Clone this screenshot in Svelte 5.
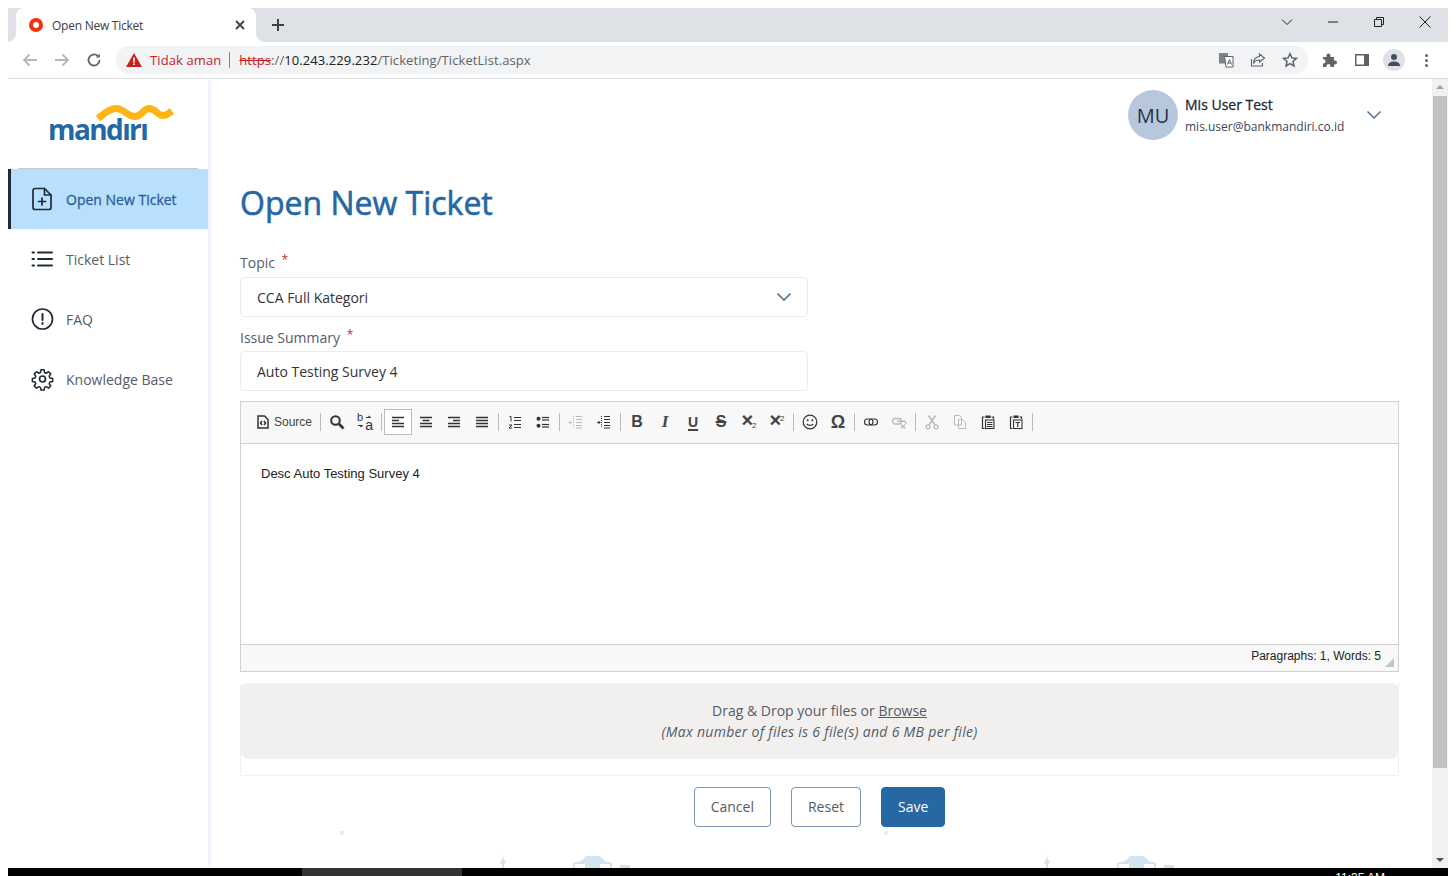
<script>
	const nav = [
		{ label: 'Open New Ticket', active: true, icon: '<path d="M4 1.500h9.500L20 8v12.500a2 2 0 0 1-2 2H4a2 2 0 0 1-2-2v-17a2 2 0 0 1 2-2z"/><path d="M13.500 1.500V8H20M11 11v7M7.500 14.500h7"/>' },
		{ label: 'Ticket List', icon: '<path d="M7 5.500h14M7 12h14M7 18.500h14" stroke-width="2"/><path d="M1.500 5.500h1.500M1.500 12h1.500M1.500 18.500h1.500" stroke-width="2"/>' },
		{ label: 'FAQ', icon: '<circle cx="11.500" cy="12" r="10"/><path d="M11.500 7v6M11.500 16v1" stroke-width="2"/>' },
		{ label: 'Knowledge Base', icon: '<circle cx="11.500" cy="12" r="3"/><path d="M9.800 1.800h3.400l.6 3 1.800.8 2.600-1.700 2.400 2.400-1.700 2.600.8 1.800 3 .6v3.400l-3 .6-.8 1.800 1.700 2.600-2.400 2.400-2.600-1.700-1.800.8-.6 3H9.800l-.6-3-1.800-.8-2.600 1.700-2.400-2.400 1.700-2.600-.8-1.800-3-.6v-3.400l3-.6.800-1.800-1.700-2.600 2.400-2.400 2.600 1.700 1.800-.8z" transform="translate(1.100 1.200) scale(.905)"/>' }
	];

	const lines = (rows) => rows.map(([a, b, y]) => `<path d="M${a} ${y}H${b}"/>`).join('');

	// ckeditor toolbar, one entry per button, 'sep' for a divider
	const tools = [
		{ cls: 'source' },
		'sep',
		{ svg: '<circle cx="6.500" cy="6.500" r="4.300" stroke-width="2"/><path d="M10 10l4.500 4.500" stroke-width="2.600"/>' },
		{ text: 'b', sub: 'a', svg: '<path d="M9 3.500h4l-1.500-1.500M1 11.500h4l-1.500 1.500" stroke-width="1.100"/>', cls: 'replace' },
		'sep',
		{ svg: lines([[2, 14, 3.5], [2, 9, 6.5], [2, 14, 9.5], [2, 14, 12.5]]), cls: 'on' },
		{ svg: lines([[2, 14, 3.5], [4.5, 11.5, 6.5], [2, 14, 9.5], [2, 14, 12.5]]) },
		{ svg: lines([[2, 14, 3.5], [7, 14, 6.5], [2, 14, 9.5], [2, 14, 12.5]]) },
		{ svg: lines([[2, 14, 3.5], [2, 14, 6.500], [2, 14, 9.5], [2, 14, 12.5]]) },
		'sep',
		{ svg: '<g stroke-width="1">' + lines([[7, 14, 3.5], [7, 14, 6.500], [7, 14, 10.500], [7, 14, 13.500]]) + '</g><path d="M2.500 2.500h1.500v5M2 11h3l-3 3h3" stroke-width="1"/>' },
		{ svg: '<g stroke-width="1.200">' + lines([[7, 14, 3.5], [7, 14, 6], [7, 14, 10.500], [7, 14, 13]]) + '</g><circle cx="3.500" cy="4.800" r="2" fill="#333" stroke="none"/><circle cx="3.500" cy="11.800" r="2" fill="#333" stroke="none"/>' },
		'sep',
		{ off: true, svg: '<g stroke-width="1">' + lines([[8, 14, 2.500], [8, 14, 5.500], [8, 14, 8.500], [8, 14, 11.500], [8, 14, 14]]) + '</g><path d="M5.500 2v12" stroke-width="1" stroke-dasharray="1 1"/><path d="M1 8.500h3M2.500 7l-1.500 1.500 1.500 1.500" stroke-width="1"/>' },
		{ svg: '<g stroke-width="1">' + lines([[8, 14, 2.500], [8, 14, 5.500], [8, 14, 8.500], [8, 14, 11.500], [8, 14, 14]]) + '</g><path d="M5.500 2v12" stroke-width="1" stroke-dasharray="1 1"/><path d="M1 8.500h3M2.500 7l1.500 1.500-1.500 1.500" stroke-width="1"/>' },
		'sep',
		{ glyph: 'B', cls: 'g-b' },
		{ glyph: 'I', cls: 'g-i' },
		{ glyph: 'U', cls: 'g-u' },
		{ glyph: 'S', cls: 'g-s' },
		{ glyph: '×', tiny: '2', cls: 'g-x down' },
		{ glyph: '×', tiny: '2', cls: 'g-x up' },
		'sep',
		{ svg: '<circle cx="8" cy="8" r="6.800" stroke-width="1.200"/><circle cx="5.700" cy="6.200" r="1" fill="#333" stroke="none"/><circle cx="10.300" cy="6.200" r="1" fill="#333" stroke="none"/><path d="M4.800 9.800c1.500 2 4.900 2 6.400 0" stroke-width="1.200"/>' },
		{ glyph: 'Ω', cls: 'g-o' },
		'sep',
		{ svg: '<rect x="1.500" y="5" width="8.500" height="6" rx="3" stroke-width="1.100"/><rect x="6" y="5" width="8.500" height="6" rx="3" stroke-width="1.100"/>' },
		{ off: true, svg: '<rect x="1.500" y="4.500" width="9" height="5.500" rx="2.700" stroke-width="1.400"/><path d="M6 7.200h7.500c1.200 0 1.500 2 1 2.800" stroke-width="1.400"/><path d="M10 10.500l4 4M14 10.500l-4 4" stroke-width="1.400"/>' },
		'sep',
		{ off: true, svg: '<path d="M4.500 1.500l6.500 9.500M11.500 1.500L5 11" stroke-width="1.700"/><circle cx="4" cy="12.800" r="2" stroke-width="1.300"/><circle cx="12" cy="12.800" r="2" stroke-width="1.300"/>' },
		{ off: true, svg: '<path d="M2.500 1.500h5l2 2v7.500h-7zM6.500 5.500h4l3 3v6h-7z" stroke-width="1"/>' },
		{ svg: '<path d="M4.500 3H2.500v11.500h2M5.500 3h5M11.500 3h2v2" stroke-width="1.200"/><rect x="5.500" y="1.500" width="5" height="2.500" fill="#333" stroke="none"/><rect x="5.500" y="6" width="8.500" height="8.500" stroke-width="1.100"/><path d="M7 8.500h5.500M7 10.500h5.500M7 12.500h5.500" stroke-width="1"/>' },
		{ svg: '<path d="M4.500 3H2.500v11.500h2M11.500 3h2v2" stroke-width="1.200"/><rect x="5.500" y="1.500" width="5" height="2.500" fill="#333" stroke="none"/><rect x="5.500" y="6" width="8.500" height="8.500" stroke-width="1.100"/><path d="M7.500 8.500h4.500M9.750 8.500v4.500" stroke-width="1.200"/>' },
		'sep'
	];
</script>

<div class="window">
	<div class="tabstrip">
		<div class="tab">
			<span class="favicon"></span>
			<span class="tab-title">Open New Ticket</span>
			<svg class="tab-x" width="10" height="10" viewBox="0 0 10 10"><path d="M1 1l8 8M9 1L1 9" /></svg>
		</div>
		<svg class="newtab" width="12" height="12" viewBox="0 0 12 12"><path d="M6 0v12M0 6h12" /></svg>
		<div class="caption">
			<svg width="12" height="12" viewBox="0 0 12 12" class="cap-chev"><path d="M1 3.500l5 5 5-5" /></svg>
			<svg width="12" height="12" viewBox="0 0 12 12" class="cap-min"><path d="M1 6h10" /></svg>
			<svg width="12" height="12" viewBox="0 0 12 12" class="cap-max"><path d="M1.500 3.500h7v7h-7zM3.500 3.500v-2h7v7h-2" /></svg>
			<svg width="12" height="12" viewBox="0 0 12 12" class="cap-close"><path d="M.5.500l11 11M11.500.500l-11 11" /></svg>
		</div>
	</div>

	<div class="toolbar">
		<div class="nav-btns">
			<svg width="16" height="16" viewBox="0 0 16 16" class="ico-off"><path d="M15 8H2M7.500 2.500L2 8l5.500 5.500" /></svg>
			<svg width="16" height="16" viewBox="0 0 16 16" class="ico-off"><path d="M1 8h13M8.500 2.500L14 8l-5.500 5.500" /></svg>
			<svg width="16" height="16" viewBox="0 0 16 16" class="ico-dark"><path d="M13.500 8a5.500 5.500 0 1 1-1.600-3.900" /><path d="M13.800 1.500v4h-4z" fill="#5f6368" stroke="none" /></svg>
		</div>
		<div class="omnibox">
			<svg class="warn" width="16" height="14" viewBox="0 0 16 14"><path d="M8 0l8 14H0z" fill="#c5221f" /><path d="M7.200 4.500h1.600v5H7.200zM7.200 10.500h1.600v1.600H7.200z" fill="#fff" /></svg>
			<span class="insecure">Tidak aman</span>
			<span class="omni-div"></span>
			<span class="url"><span class="scheme">https</span>://<span class="host">10.243.229.232</span>/Ticketing/TicketList.aspx</span>
			<div class="omni-right">
				<svg width="16" height="16" viewBox="0 0 16 16"><rect x="1" y="1" width="9" height="10.500" fill="#7f8387" /><path d="M6.500 4.500h8.500v10.500H8z" fill="#fff" stroke="#5f6368" stroke-width="1" /><path d="M9.500 12.500l2-5 2 5M10 11h3" stroke="#5f6368" stroke-width="1" fill="none" /></svg>
				<svg width="16" height="16" viewBox="0 0 16 16" class="line"><path d="M1.500 7v7h11v-3" /><path d="M9.500 2l5 4-5 4V8C7 8 4.500 9 3.500 11.500 3.500 7.500 6 5 9.500 4.500z" /></svg>
				<svg width="16" height="16" viewBox="0 0 16 16" class="line strong"><path d="M8 1.700l1.900 4.200 4.500.5-3.400 3 1 4.500L8 11.600l-4 2.300 1-4.500-3.400-3 4.500-.5z" /></svg>
			</div>
		</div>
		<div class="tool-right">
			<svg width="16" height="16" viewBox="0 0 16 16"><path d="M1 5h3.500V3.500a2 2 0 0 1 4 0V5H12v3.500h1a2 2 0 0 1 0 4h-1V15H8.500v-1a2 2 0 0 0-4 0v1H1v-3.500h1a2.200 2.200 0 0 0 0-4.200H1z" fill="#5f6368" /></svg>
			<svg width="16" height="16" viewBox="0 0 16 16"><rect x="1" y="2" width="14" height="12" fill="#5f6368" /><rect x="2.500" y="3.500" width="7.500" height="9" fill="#fff" /></svg>
			<span class="profile"><svg width="14" height="14" viewBox="0 0 14 14"><circle cx="7" cy="4" r="3" fill="#444d5e" /><path d="M1 13c0-3 2.500-4.500 6-4.500s6 1.500 6 4.500z" fill="#444d5e" /></svg></span>
			<span class="kebab"><i></i><i></i><i></i></span>
		</div>
	</div>

	<div class="viewport">
		<aside class="sidebar">
			<div class="brand">
				<span class="wordmark">mandırı</span>
				<svg class="wave" width="78" height="20" viewBox="0 0 78 20"><path d="M2 13.500C8 9 13 3.500 20 3.500c8 0 11 8 19 8 7 0 8-8 14-8 7 0 8 7 14 7 3 0 6-2 9-4.500" fill="none" stroke="#fdb515" stroke-width="7" /></svg>
			</div>
			<nav>
				{#each nav as item}
					<a class="nav-item" class:active={item.active} href="#top">
						<svg width="23" height="24" viewBox="0 0 23 24">{@html item.icon}</svg>
						<span>{item.label}</span>
					</a>
				{/each}
			</nav>
		</aside>

		<main class="content">
			<div class="skyline" aria-hidden="true">
				{#each [0, 544] as shift}
					<svg width="460" height="44" viewBox="0 0 460 44" style="left: {shift}px">
						<rect x="132" y="7" width="4" height="4" fill="#e6eef8" />
						<path d="M295 31l1 5 2 2-2 3v3h-2v-3l-2-3 2-2z" fill="#d3e4f1" />
						<path d="M365 39l8-2 5-5h14l5 5 7 2v5h-39z" fill="#d3e4f1" />
						<path d="M367 40h10v4h-10zM392 40h10v4h-10z" fill="#fff" />
						<rect x="412" y="41" width="10" height="3" fill="#d3e4f1" />
					</svg>
				{/each}
			</div>

			<header class="userbar">
				<span class="avatar">MU</span>
				<div class="who">
					<div class="who-name">Mis User Test</div>
					<div class="who-mail">mis.user@bankmandiri.co.id</div>
				</div>
				<svg class="user-chev" width="16" height="10" viewBox="0 0 16 10"><path d="M1.500 1.500L8 8l6.500-6.500" /></svg>
			</header>

			<h1>Open New Ticket</h1>

			<label class="field-label" for="topic">Topic <em>*</em></label>
			<div class="field select" id="topic">
				<span>CCA Full Kategori</span>
				<svg width="16" height="10" viewBox="0 0 16 10"><path d="M1.500 1.500L8 8l6.500-6.500" /></svg>
			</div>

			<label class="field-label second" for="summary">Issue Summary <em>*</em></label>
			<div class="field" id="summary"><span>Auto Testing Survey 4</span></div>

			<section class="editor">
				<div class="ed-toolbar">
					{#each tools as t}
						{#if t === 'sep'}
							<span class="sep"></span>
						{:else if t.cls === 'source'}
							<span class="ed-btn source">
								<svg width="12" height="14" viewBox="0 0 12 14"><path d="M1 1h6.500L11 4.500V13H1z" fill="none" stroke="#333" /><path d="M5 6L3.500 8 5 10M7 6l1.500 2L7 10" fill="none" stroke="#333" /></svg>
								<span>Source</span>
							</span>
						{:else}
							<span class="ed-btn {t.cls ?? ''}" class:off={t.off}>
								{#if t.glyph}
									<span class="glyph">{t.glyph}{#if t.tiny}<small>{t.tiny}</small>{/if}</span>
								{:else}
									{#if t.text}
										<span class="rep-b">{t.text}</span><span class="rep-a">{t.sub}</span>
									{/if}
									<svg width="16" height="16" viewBox="0 0 16 16">{@html t.svg}</svg>
								{/if}
							</span>
						{/if}
					{/each}
				</div>
				<div class="ed-body">Desc Auto Testing Survey 4</div>
				<div class="ed-status">
					<span>Paragraphs: 1, Words: 5</span>
					<span class="grip"></span>
				</div>
			</section>

			<div class="upload">
				<div class="drop">
					<div>Drag &amp; Drop your files or <u>Browse</u></div>
					<div class="hint">(Max number of files is 6 file(s) and 6 MB per file)</div>
				</div>
			</div>

			<div class="actions">
				<button type="button" class="btn">Cancel</button>
				<button type="button" class="btn">Reset</button>
				<button type="button" class="btn primary">Save</button>
			</div>
		</main>

		<div class="scrollbar">
			<span class="arrow up"></span>
			<span class="thumb"></span>
			<span class="arrow down"></span>
		</div>
	</div>

	<div class="taskbar">
		<span class="task-active"></span>
		<span class="clock">11:35 AM</span>
	</div>
</div>

<style>
	:global(body) {
		margin: 0;
		background: #fff;
		overflow: hidden;
	}
	.window {
		height: 868px;
		padding: 8px 8px 0;
		display: flex;
		flex-direction: column;
		font-family: 'Open Sans', 'Noto Sans', sans-serif;
		color: #333;
	}
	svg {
		display: block;
		flex: none;
	}

	.tabstrip {
		height: 34px;
		background: #dee1e6;
		display: flex;
		align-items: flex-end;
		flex: none;
		position: relative;
	}
	.tab {
		margin-left: 8px;
		width: 240px;
		height: 34px;
		background: #fff;
		border-radius: 8px 8px 0 0;
		display: flex;
		align-items: center;
		box-sizing: border-box;
		padding-left: 13px;
		position: relative;
	}
	.tab::before,
	.tab::after {
		content: '';
		position: absolute;
		bottom: 0;
		width: 8px;
		height: 8px;
	}
	.tab::before {
		left: -8px;
		background: radial-gradient(circle at 0 0, #dee1e6 7.500px, #fff 8px);
	}
	.tab::after {
		right: -8px;
		background: radial-gradient(circle at 100% 0, #dee1e6 7.500px, #fff 8px);
	}
	.favicon {
		width: 14px;
		height: 14px;
		border-radius: 50%;
		background: #f4300e;
		position: relative;
	}
	.favicon::after {
		content: '';
		position: absolute;
		inset: 4px;
		background: #fff;
		border-radius: 50%;
	}
	.tab-title {
		margin-left: 9px;
		font-size: 12px;
		letter-spacing: -0.25px;
		color: #3c4043;
		flex: 1;
	}
	.tab-x {
		margin-right: 11px;
		stroke: #3c4043;
		stroke-width: 1.800;
		fill: none;
	}
	.newtab {
		align-self: center;
		margin-left: 16px;
		stroke: #3c4043;
		stroke-width: 2;
		fill: none;
	}
	.caption {
		margin-left: auto;
		align-self: flex-start;
		margin-top: 8px;
		display: flex;
		gap: 34px;
		margin-right: 17px;
	}
	.caption svg {
		stroke: #202124;
		fill: none;
		stroke-width: 1;
	}

	.toolbar {
		height: 36px;
		border-bottom: 1px solid #dadce0;
		background: #fff;
		display: flex;
		align-items: center;
		flex: none;
	}
	.nav-btns {
		width: 108px;
		display: flex;
		padding-left: 14px;
		box-sizing: border-box;
		gap: 16px;
	}
	.nav-btns svg {
		fill: none;
		stroke-width: 1.800;
	}
	.ico-off {
		stroke: #b4b7bb;
	}
	.ico-dark {
		stroke: #5f6368;
	}
	.omnibox {
		width: 1192px;
		height: 28px;
		background: #f1f3f4;
		border-radius: 14px;
		display: flex;
		align-items: center;
		padding-left: 10px;
		box-sizing: border-box;
		font-size: 13px;
	}
	.insecure {
		color: #c5221f;
		margin-left: 8px;
		letter-spacing: 0.1px;
	}
	.omni-div {
		width: 1px;
		height: 16px;
		background: #80868b;
		margin: 0 9px 0 8px;
	}
	.url {
		color: #5f6368;
		letter-spacing: 0.08px;
	}
	.scheme {
		color: #c5221f;
		text-decoration: line-through;
	}
	.host {
		color: #202124;
	}
	.omni-right {
		margin-left: auto;
		display: flex;
		gap: 16px;
		padding-right: 10px;
	}
	.line {
		fill: none;
		stroke: #5f6368;
		stroke-width: 1.100;
	}
	.strong {
		stroke-width: 1.500;
	}
	.tool-right {
		display: flex;
		align-items: center;
		margin-left: 14px;
		gap: 16px;
	}
	.profile {
		width: 22px;
		height: 22px;
		margin-left: -3px;
		border-radius: 50%;
		background: #dee1e6;
		display: flex;
		align-items: center;
		justify-content: center;
	}
	.kebab {
		display: flex;
		flex-direction: column;
		gap: 2px;
		margin-left: 4px;
	}
	.kebab i {
		width: 3px;
		height: 3px;
		border-radius: 50%;
		background: #5f6368;
	}

	.viewport {
		height: 789px;
		display: flex;
		overflow: hidden;
		flex: none;
	}

	.sidebar {
		width: 200px;
		flex: none;
		background: #fff;
		box-shadow: 1px 0 5px rgba(90, 140, 210, 0.22);
		position: relative;
		z-index: 1;
	}
	.brand {
		height: 90px;
		margin: 0 10px;
		border-bottom: 1px solid #c8c8c8;
		box-sizing: border-box;
		position: relative;
	}
	.wave {
		position: absolute;
		left: 78px;
		top: 26px;
	}
	.wordmark {
		position: absolute;
		left: 30px;
		top: 31px;
		font-size: 28px;
		font-weight: 700;
		color: #2268a4;
		letter-spacing: -1.600px;
	}
	.nav-item {
		height: 60px;
		display: flex;
		align-items: center;
		gap: 12px;
		padding-left: 23px;
		box-sizing: border-box;
		font-size: 14px;
		color: #555b66;
		text-decoration: none;
	}
	.nav-item svg {
		fill: none;
		stroke: #222a38;
		stroke-width: 1.700;
		stroke-linecap: round;
		stroke-linejoin: round;
	}
	.nav-item.active {
		background: #b8dffe;
		border-left: 3px solid #1e2a3a;
		padding-left: 20px;
		color: #2c5f94;
		-webkit-text-stroke: 0.3px #2c5f94;
	}

	.content {
		flex: 1;
		min-width: 0;
		padding: 0 33px 0 32px;
		position: relative;
	}
	.skyline {
		position: absolute;
		left: 0;
		right: 0;
		bottom: 0;
		height: 44px;
	}
	.skyline svg {
		position: absolute;
		left: 0;
		top: 0;
	}
	.userbar {
		display: flex;
		align-items: center;
		height: 50px;
		padding-top: 11px;
		padding-left: 888px;
	}
	.avatar {
		width: 50px;
		height: 50px;
		border-radius: 50%;
		background: #b8c8dc;
		color: #2a3342;
		font-size: 20px;
		display: flex;
		align-items: center;
		justify-content: center;
		flex: none;
	}
	.who {
		margin-left: 7px;
		width: 181px;
		flex: none;
	}
	.who-name {
		font-size: 14px;
		color: #1e2a3a;
		-webkit-text-stroke: 0.3px #1e2a3a;
		line-height: 20px;
	}
	.who-mail {
		font-size: 12px;
		color: #3c4655;
		line-height: 18px;
		margin-top: 3px;
	}
	.user-chev {
		fill: none;
		stroke: #53708f;
		stroke-width: 1.500;
	}
	h1 {
		margin: 41px 0 0;
		font-size: 32px;
		font-weight: 400;
		-webkit-text-stroke: 0.6px #2568a4;
		line-height: 44px;
		color: #2568a4;
	}
	.field-label {
		display: block;
		margin-top: 28px;
		font-size: 14px;
		line-height: 20px;
		color: #555b66;
	}
	.field-label em {
		color: #b33;
		font-style: normal;
		font-size: 12px;
		margin-left: 3px;
		position: relative;
		top: -4px;
	}
	.field-label.second {
		margin-top: 11px;
		margin-bottom: -1px;
	}
	.field {
		width: 568px;
		height: 40px;
		margin-top: 3px;
		border: 1px solid #ebebeb;
		border-radius: 4px;
		box-sizing: border-box;
		display: flex;
		align-items: center;
		justify-content: space-between;
		padding: 0 15px 0 16px;
		font-size: 14px;
		color: #333;
	}
	.select svg {
		fill: none;
		stroke: #53708f;
		stroke-width: 1.600;
	}

	.editor {
		margin-top: 10px;
		border: 1px solid #d1d1d1;
		font-family: 'Liberation Sans', Arial, sans-serif;
	}
	.ed-toolbar {
		height: 42px;
		box-sizing: border-box;
		padding-bottom: 1px;
		background: #f8f8f8;
		border-bottom: 1px solid #d1d1d1;
		display: flex;
		align-items: center;
		padding-left: 12px;
	}
	.sep {
		width: 1px;
		height: 18px;
		background: #bcbcbc;
		margin: 0 2px;
		flex: none;
	}
	.ed-btn {
		width: 28px;
		height: 26px;
		flex: none;
		box-sizing: border-box;
		display: flex;
		align-items: center;
		justify-content: center;
		position: relative;
		color: #333;
	}
	.ed-btn svg {
		fill: none;
		stroke: #333;
		stroke-width: 1.500;
	}
	.ed-btn.off {
		opacity: 0.3;
	}
	.ed-btn.on {
		background: #fff;
		border: 1px solid #bcbcbc;
	}
	.ed-btn.source {
		width: 65px;
		font-size: 12px;
		gap: 5px;
		justify-content: flex-start;
		padding-left: 4px;
		color: #444;
	}
	.ed-btn.source svg {
		stroke: none;
	}
	.glyph {
		font-size: 16px;
		font-weight: 700;
		line-height: 16px;
		color: #444;
	}
	.glyph small {
		font-size: 8px;
		font-weight: 400;
		position: relative;
	}
	.g-i .glyph {
		font-style: italic;
		font-family: 'Liberation Serif', serif;
		font-size: 17px;
	}
	.g-u .glyph {
		text-decoration: underline;
		text-underline-offset: 2px;
		text-decoration-thickness: 1.500px;
		font-size: 14px;
	}
	.g-s .glyph {
		text-decoration: line-through;
		text-decoration-thickness: 1.500px;
	}
	.g-x .glyph {
		font-size: 20px;
	}
	.g-x.down small {
		top: 1px;
		margin-left: -1px;
	}
	.g-x.up small {
		top: -6px;
		margin-left: -1px;
	}
	.g-o .glyph {
		font-size: 18px;
	}
	.rep-b,
	.rep-a {
		position: absolute;
		line-height: 11px;
		color: #333;
	}
	.rep-b {
		left: 6px;
		top: 3px;
		font-size: 11px;
	}
	.rep-a {
		right: 6px;
		bottom: 4px;
		font-size: 14px;
	}
	.ed-body {
		height: 200px;
		box-sizing: border-box;
		padding: 21px 20px 0;
		font-size: 13px;
		line-height: 17px;
		color: #222;
		background: #fff;
	}
	.ed-status {
		height: 27px;
		background: #f8f8f8;
		border-top: 1px solid #d1d1d1;
		display: flex;
		align-items: center;
		justify-content: flex-end;
		padding-right: 17px;
		font-size: 12px;
		color: #222;
		position: relative;
		padding-bottom: 5px;
		box-sizing: border-box;
	}
	.grip {
		position: absolute;
		right: 4px;
		bottom: 4px;
		width: 0;
		height: 0;
		border-left: 9px solid transparent;
		border-bottom: 9px solid #c4c4c4;
	}

	.upload {
		margin-top: 11px;
		border: 1px solid #f0f0f0;
		border-top: 0;
		border-radius: 0 0 2px 2px;
		height: 93px;
		box-sizing: border-box;
	}
	.drop {
		height: 76px;
		margin: 0 -1px;
		background: #f1f0ef;
		border-radius: 8px;
		display: flex;
		flex-direction: column;
		align-items: center;
		justify-content: center;
		font-size: 14px;
		line-height: 21px;
		color: #555b66;
	}
	.hint {
		font-style: italic;
		letter-spacing: 0.3px;
	}
	.actions {
		margin-top: 11px;
		display: flex;
		justify-content: center;
		gap: 20px;
		position: relative;
	}
	.btn {
		height: 40px;
		padding: 0 16px 2px;
		font: 400 14px 'Open Sans', 'Noto Sans', sans-serif;
		color: #555b66;
		background: #fff;
		border: 1px solid #7d93ae;
		border-radius: 4px;
	}
	.btn.primary {
		background: #2568a4;
		border-color: #2568a4;
		color: #fff;
	}

	.scrollbar {
		width: 16px;
		flex: none;
		background: #f1f1f1;
		display: flex;
		flex-direction: column;
		align-items: center;
		position: relative;
		z-index: 1;
	}
	.thumb {
		width: 14px;
		height: 672px;
		margin-top: 17px;
		background: #c1c1c1;
	}
	.arrow {
		position: absolute;
		width: 0;
		height: 0;
		border-left: 4px solid transparent;
		border-right: 4px solid transparent;
	}
	.arrow.up {
		top: 6px;
		border-bottom: 4px solid #a3a3a3;
	}
	.arrow.down {
		bottom: 6px;
		border-top: 4px solid #505050;
	}

	.taskbar {
		height: 8px;
		background: #000;
		position: relative;
		overflow: hidden;
		flex: none;
	}
	.task-active {
		position: absolute;
		left: 294px;
		top: 0;
		width: 160px;
		height: 8px;
		background: #333;
	}
	.clock {
		position: absolute;
		right: 63px;
		top: 3px;
		font-size: 12px;
		line-height: 14px;
		color: #fff;
		font-family: 'Liberation Sans', sans-serif;
	}
</style>
